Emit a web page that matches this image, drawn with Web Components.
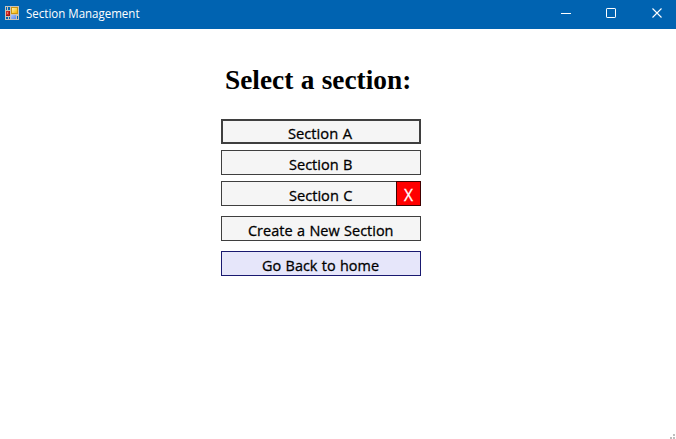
<!DOCTYPE html>
<html lang="en"><head><meta charset="utf-8"><title>Section Management</title>
<style>html,body{margin:0;height:100%;background:#fff;overflow:hidden}</style></head><body>
<app-window caption="Section Management">
  <section-picker></section-picker>
</app-window>
<script>
const define=(name,html,init)=>customElements.define(name,class extends HTMLElement{
  constructor(){super();const t=document.createElement('template');t.innerHTML=html;
    this.attachShadow({mode:'open'}).append(t.content.cloneNode(true));}
  connectedCallback(){if(init)init(this,this.shadowRoot);}
});

/* Single line of text, condensed or widened to occupy the given width */
define('fit-text',`<style>:host{display:inline-block;white-space:pre}span{display:inline-block;transform-origin:0 0}</style><span></span>`,(el,root)=>{
  const s=root.querySelector('span'),w=+el.getAttribute('width');
  s.textContent=el.getAttribute('text');
  const now=s.getBoundingClientRect().width;
  if(w){s.style.transform='scaleX('+w/now+')';s.style.marginRight=(w-now)+'px';}
});

define('app-icon',`<style>:host{display:block;width:14px;height:14px}svg{display:block}</style>
<svg width="14" height="14" shape-rendering="crispEdges">
<defs><linearGradient id="y" x2="1" y2="1"><stop stop-color="#fff3b0"/><stop offset="1" stop-color="#f2b400"/></linearGradient>
<linearGradient id="b" x2="1" y2="1"><stop stop-color="#a8c4ff"/><stop offset="1" stop-color="#5c86e8"/></linearGradient></defs>
<path fill="#c9c3b8" fill-rule="evenodd" d="M0 0h14v14H0zM1 1v3h1V1zM3 1v3h2V1zM1 11v2h2v-2zM4 11v2h1v-2zM12 10v3h1v-3z"/>
<rect x="1" y="5" width="4" height="5" fill="#a01616"/><rect x="1" y="5" width="3" height="4" fill="#d42c22"/><rect x="2" y="6" width="1" height="2" fill="#f08070"/>
<rect x="6" y="1" width="7" height="7" fill="#c9940f"/><rect x="7" y="2" width="5" height="5" fill="url(#y)"/>
<rect x="6" y="9" width="5" height="4" fill="url(#b)"/></svg>`);

define('caption-controls',`<style>:host{display:block;width:130px;height:29px}svg{display:block}</style>
<svg width="130" height="29" fill="none" stroke="#fff"><path d="M15 13.5h10"/><rect x="60.5" y="8.5" width="9" height="9" rx=".6"/><path d="M106.5 8.5l9 9M115.5 8.5l-9 9" stroke-width="1.1"/></svg>`);

define('title-bar',`<style>:host{display:flex;height:29px;box-sizing:border-box;background:#0063b1;color:#fff;font:12px/28px "Open Sans","Noto Sans",sans-serif}
app-icon{margin:6px 7px 0 5px}::slotted(*){flex:1}</style><app-icon></app-icon><slot></slot><caption-controls></caption-controls>`);

define('resize-grip',`<style>:host{display:block}svg{display:block}</style>
<svg width="5" height="5" fill="#bfbfbf"><path d="M3 0h2v2H3zM0 3h2v2H0zM3 3h2v2H3z"/></svg>`);

define('app-window',`<style>:host{display:flex;flex-direction:column;width:676px;height:439px;background:#fff}
main{flex:1;min-height:0}footer{display:flex;justify-content:flex-end;padding:0 1px 0 0}</style><title-bar></title-bar><main><slot></slot></main><footer><resize-grip></resize-grip></footer>`,
(el,root)=>{
  const text=document.createElement('fit-text');
  text.setAttribute('text',el.getAttribute('caption'));text.setAttribute('width','113.5');
  root.querySelector('title-bar').append(text);
});

define('flat-button',`<style>
:host{display:flex;flex:1;box-sizing:border-box;height:25px;border:1px solid #3f3f3f;background:#f5f5f5;color:#000;
 font:15.3px/20px "Open Sans","Noto Sans",sans-serif;word-spacing:.7px;-webkit-text-stroke:.3px currentColor;justify-content:center;padding-top:3px}
:host([focused]){border-width:2px;padding-top:2px}
:host([kind=home]){background:#e6e6fa;border-color:#191970}
:host([kind=delete]){flex:none;width:25px;background:#f00;border-color:#400000;color:#fff;margin-left:-25px;font-size:16px}
::slotted(*){position:relative;left:var(--nudge,0px)}
</style><slot></slot>`);

define('section-picker',`<style>:host{display:block;padding:35px 0 0 221px}
h1{margin:0 0 23px 4px;font:bold 27px/32px "Liberation Serif",serif;height:32px;word-spacing:.5px}
.row{display:flex;width:200px;margin-bottom:6px}.gap{margin-bottom:10px}</style>
<h1><fit-text text="Select a section:" width="186.3"></fit-text></h1>
<div class="row"><flat-button focused style="--nudge:-1px"><fit-text text="Section A" width="64"></fit-text></flat-button></div>
<div class="row"><flat-button style="--nudge:-.5px"><fit-text text="Section B" width="63.5"></fit-text></flat-button></div>
<div class="row gap"><flat-button style="--nudge:-.5px"><fit-text text="Section C" width="63.5"></fit-text></flat-button><flat-button kind="delete"><fit-text text="X" width="9"></fit-text></flat-button></div>
<div class="row gap"><flat-button style="--nudge:-.5px"><fit-text text="Create a New Section" width="145.5"></fit-text></flat-button></div>
<div class="row"><flat-button kind="home" style="--nudge:-1px"><fit-text text="Go Back to home" width="117"></fit-text></flat-button></div>`);
</script></body></html>
